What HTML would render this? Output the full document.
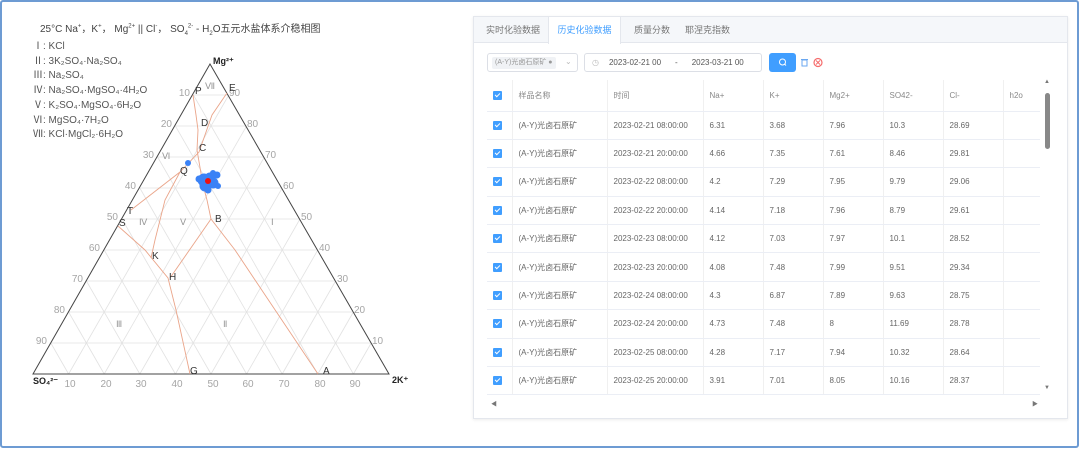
<!DOCTYPE html>
<html><head><meta charset="utf-8">
<style>
*{margin:0;padding:0;box-sizing:border-box}
body{width:1080px;height:450px;background:#fff;font-family:"Liberation Sans","Noto Sans CJK SC",sans-serif;position:relative;overflow:hidden}
.frame{position:absolute;left:0;top:0;width:1079px;height:448px;border:2px solid #6d9bd3;border-radius:3px}
.card{position:absolute;left:473px;top:16px;width:595px;height:403px;border:1px solid #e4e7ed;background:#fff;box-shadow:0 1px 3px rgba(0,0,0,.08)}
.tabs{height:26px;background:#f5f7fa;border-bottom:1px solid #e4e7ed;position:relative}
.tab{position:absolute;top:0;height:26px;line-height:26px;font-size:9px;color:#777}
.tab.act{background:#fff;color:#409eff;height:27px;border-left:1px solid #e4e7ed;border-right:1px solid #e4e7ed}
.sel{position:absolute;left:13px;top:36px;width:91px;height:19px;border:1px solid #dcdfe6;border-radius:3px}
.tag{position:absolute;left:4px;top:3px;height:12px;background:#f0f2f5;font-size:7px;color:#999;line-height:12px;padding:0 3px;border-radius:2px}
.date{position:absolute;left:110px;top:36px;width:178px;height:19px;border:1px solid #dcdfe6;border-radius:3px;font-size:8px;color:#555;line-height:17px}
.btn{position:absolute;left:295px;top:36px;width:27px;height:19px;background:#409eff;border-radius:3px}
table{position:absolute;left:13px;top:63px;border-collapse:collapse;font-size:8px;color:#666}
td{height:28.4px;border-bottom:1px solid #ebeef5;border-right:1px solid #f0f0f0;padding-left:6px;white-space:nowrap}
tr.h td{height:31px;color:#888}
.cb{display:inline-block;width:9px;height:9px;background:#409eff;border-radius:1px;position:relative;top:1px}
.cb:after{content:"";position:absolute;left:3px;top:1px;width:2px;height:4px;border:solid #fff;border-width:0 1px 1px 0;transform:rotate(45deg)}
</style></head><body>
<div class="frame"></div>
<div style="position:absolute;left:40px;top:20px;font-size:10px;color:#444">25°C Na<sup style="font-size:6px">+</sup>，K<sup style="font-size:6px">+</sup>， Mg<sup style="font-size:6px">2+</sup> || Cl<sup style="font-size:6px">-</sup>， SO<sub style="font-size:6px">4</sub><sup style="font-size:6px">2-</sup> - H<sub style="font-size:6px">2</sub>O五元水盐体系介稳相图</div>
<div style="position:absolute;left:33px;top:40px;font-size:10px;color:#555;line-height:14.7px">
Ⅰ: KCl<br>Ⅱ: 3K₂SO₄·Na₂SO₄<br>Ⅲ: Na₂SO₄<br>Ⅳ: Na₂SO₄·MgSO₄·4H₂O<br>Ⅴ: K₂SO₄·MgSO₄·6H₂O<br>Ⅵ: MgSO₄·7H₂O<br>Ⅶ: KCl·MgCl₂·6H₂O</div>
<svg width="470" height="450" style="position:absolute;left:0;top:0" font-family="Liberation Sans,sans-serif">
<g stroke="#e2e2e2" stroke-width="0.8">
<line x1="192.2" y1="95" x2="227.8" y2="95"/><line x1="174.4" y1="126" x2="245.6" y2="126"/><line x1="156.6" y1="157" x2="263.4" y2="157"/><line x1="138.8" y1="188" x2="281.2" y2="188"/><line x1="121" y1="219" x2="299" y2="219"/><line x1="103.2" y1="250" x2="316.8" y2="250"/><line x1="85.4" y1="281" x2="334.6" y2="281"/><line x1="67.6" y1="312" x2="352.4" y2="312"/><line x1="49.8" y1="343" x2="370.2" y2="343"/>
<line x1="68.6" y1="374" x2="228.8" y2="95"/><line x1="104.2" y1="374" x2="246.6" y2="126"/><line x1="139.8" y1="374" x2="264.4" y2="157"/><line x1="175.4" y1="374" x2="282.2" y2="188"/><line x1="211" y1="374" x2="300" y2="219"/><line x1="246.6" y1="374" x2="317.8" y2="250"/><line x1="282.2" y1="374" x2="335.6" y2="281"/><line x1="317.8" y1="374" x2="353.4" y2="312"/><line x1="353.4" y1="374" x2="371.2" y2="343"/>
<line x1="68.6" y1="374" x2="50.8" y2="343"/><line x1="104.2" y1="374" x2="68.6" y2="312"/><line x1="139.8" y1="374" x2="86.4" y2="281"/><line x1="175.4" y1="374" x2="104.2" y2="250"/><line x1="211" y1="374" x2="122" y2="219"/><line x1="246.6" y1="374" x2="139.8" y2="188"/><line x1="282.2" y1="374" x2="157.6" y2="157"/><line x1="317.8" y1="374" x2="175.4" y2="126"/><line x1="353.4" y1="374" x2="193.4" y2="95"/>
</g>
<polygon points="33,374 389,374 210,64" fill="none" stroke="#444" stroke-width="1"/>
<g fill="none" stroke="#eaa58a" stroke-width="0.9">
<polyline points="193,95 196,115 198,130 197,150 203,185 207,200 211,219"/>
<polyline points="227,93 212,115 199,152 180,172 131,210"/>
<polyline points="180,172 165,200 155,240 151,258"/>
<polyline points="118,226 145,250 168,278 176,310 190,374"/>
<polyline points="211,219 170,278"/>
<polyline points="211,219 235,250 318,374"/>
</g>
<g fill="#3b82f6">
<circle cx="188" cy="163" r="3"/>
<circle cx="204" cy="180" r="6.5"/><circle cx="210" cy="178" r="5.5"/><circle cx="213" cy="183" r="5.5"/><circle cx="205" cy="186" r="5.5"/><circle cx="217" cy="175" r="3.5"/><circle cx="199" cy="179" r="3.5"/><circle cx="208" cy="190" r="3.5"/><circle cx="218" cy="186" r="3"/><circle cx="213" cy="173" r="3"/>
</g>
<circle cx="208" cy="181" r="3" fill="#e11"/>
<g font-size="10" fill="#a5a5a5" text-anchor="end">
<text x="190" y="96">10</text><text x="172" y="127">20</text><text x="154" y="158">30</text><text x="136" y="189">40</text><text x="118" y="220">50</text><text x="100" y="251">60</text><text x="83" y="282">70</text><text x="65" y="313">80</text><text x="47" y="344">90</text>
</g>
<g font-size="10" fill="#a5a5a5">
<text x="229" y="96">90</text><text x="247" y="127">80</text><text x="265" y="158">70</text><text x="283" y="189">60</text><text x="301" y="220">50</text><text x="319" y="251">40</text><text x="337" y="282">30</text><text x="354" y="313">20</text><text x="372" y="344">10</text>
</g>
<g font-size="10" fill="#a5a5a5" text-anchor="middle">
<text x="70" y="387">10</text><text x="106" y="387">20</text><text x="141" y="387">30</text><text x="177" y="387">40</text><text x="213" y="387">50</text><text x="248" y="387">60</text><text x="284" y="387">70</text><text x="320" y="387">80</text><text x="355" y="387">90</text>
</g>
<g font-size="9" fill="#999">
<text x="205" y="89">Ⅶ</text><text x="162" y="159">Ⅵ</text><text x="139" y="225">Ⅳ</text><text x="180" y="225">Ⅴ</text><text x="271" y="225">Ⅰ</text><text x="116" y="327">Ⅲ</text><text x="223" y="327">Ⅱ</text>
</g>
<g font-size="10" fill="#333">
<text x="195" y="94">P</text><text x="229" y="91">E</text><text x="201" y="126">D</text><text x="199" y="151">C</text><text x="180" y="174">Q</text><text x="127" y="214">T</text><text x="119" y="226">S</text><text x="152" y="259">K</text><text x="169" y="280">H</text><text x="215" y="222">B</text><text x="190" y="374">G</text><text x="323" y="374">A</text>
</g>
<g font-size="9" font-weight="bold" fill="#222">
<text x="213" y="64">Mg²⁺</text><text x="33" y="384">SO₄²⁻</text><text x="392" y="383">2K⁺</text>
</g>
</svg>

<div class="card">
<div class="tabs">
<div class="tab" style="left:12px">实时化验数据</div>
<div class="tab act" style="left:74px;width:73px;text-align:center">历史化验数据</div>
<div class="tab" style="left:160px">质量分数</div>
<div class="tab" style="left:211px">耶涅克指数</div>
</div>
<div class="sel"><span class="tag">(A-Y)光卤石原矿 ●</span><span style="position:absolute;left:77px;top:3px;font-size:8px;color:#bbb">⌄</span></div>
<div class="date"><span style="margin-left:7px;color:#bbb">◷</span><span style="margin-left:10px">2023-02-21 00</span><span style="margin-left:14px">-</span><span style="margin-left:14px">2023-03-21 00</span></div>
<div class="btn"><svg width="27" height="19"><circle cx="13.5" cy="9" r="3" fill="none" stroke="#fff" stroke-width="1"/><line x1="15.5" y1="11" x2="17" y2="12.5" stroke="#fff"/></svg></div>
<svg style="position:absolute;left:326px;top:40px" width="28" height="12"><rect x="2" y="3" width="5" height="6" fill="none" stroke="#6aa7f0" stroke-width="1"/><line x1="1" y1="2.5" x2="8" y2="2.5" stroke="#6aa7f0"/><circle cx="18" cy="5.5" r="4" fill="none" stroke="#f56c6c" stroke-width="1.2"/><path d="M16 3.5l4 4M20 3.5l-4 4" stroke="#f56c6c"/></svg>
<table>
<tr class="h"><td style="width:25px"><span class="cb"></span></td><td style="width:95px">样品名称</td><td style="width:96px">时间</td><td style="width:60px">Na+</td><td style="width:60px">K+</td><td style="width:60px">Mg2+</td><td style="width:60px">SO42-</td><td style="width:60px">Cl-</td><td style="width:37px;border-right:none">h2o</td></tr>
<tr><td><span class="cb"></span></td><td>(A-Y)光卤石原矿</td><td>2023-02-21 08:00:00</td><td>6.31</td><td>3.68</td><td>7.96</td><td>10.3</td><td>28.69</td><td style="border-right:none"></td></tr>
<tr><td><span class="cb"></span></td><td>(A-Y)光卤石原矿</td><td>2023-02-21 20:00:00</td><td>4.66</td><td>7.35</td><td>7.61</td><td>8.46</td><td>29.81</td><td style="border-right:none"></td></tr>
<tr><td><span class="cb"></span></td><td>(A-Y)光卤石原矿</td><td>2023-02-22 08:00:00</td><td>4.2</td><td>7.29</td><td>7.95</td><td>9.79</td><td>29.06</td><td style="border-right:none"></td></tr>
<tr><td><span class="cb"></span></td><td>(A-Y)光卤石原矿</td><td>2023-02-22 20:00:00</td><td>4.14</td><td>7.18</td><td>7.96</td><td>8.79</td><td>29.61</td><td style="border-right:none"></td></tr>
<tr><td><span class="cb"></span></td><td>(A-Y)光卤石原矿</td><td>2023-02-23 08:00:00</td><td>4.12</td><td>7.03</td><td>7.97</td><td>10.1</td><td>28.52</td><td style="border-right:none"></td></tr>
<tr><td><span class="cb"></span></td><td>(A-Y)光卤石原矿</td><td>2023-02-23 20:00:00</td><td>4.08</td><td>7.48</td><td>7.99</td><td>9.51</td><td>29.34</td><td style="border-right:none"></td></tr>
<tr><td><span class="cb"></span></td><td>(A-Y)光卤石原矿</td><td>2023-02-24 08:00:00</td><td>4.3</td><td>6.87</td><td>7.89</td><td>9.63</td><td>28.75</td><td style="border-right:none"></td></tr>
<tr><td><span class="cb"></span></td><td>(A-Y)光卤石原矿</td><td>2023-02-24 20:00:00</td><td>4.73</td><td>7.48</td><td>8</td><td>11.69</td><td>28.78</td><td style="border-right:none"></td></tr>
<tr><td><span class="cb"></span></td><td>(A-Y)光卤石原矿</td><td>2023-02-25 08:00:00</td><td>4.28</td><td>7.17</td><td>7.94</td><td>10.32</td><td>28.64</td><td style="border-right:none"></td></tr>
<tr><td><span class="cb"></span></td><td>(A-Y)光卤石原矿</td><td>2023-02-25 20:00:00</td><td>3.91</td><td>7.01</td><td>8.05</td><td>10.16</td><td>28.37</td><td style="border-right:none"></td></tr>
</table>
<div style="position:absolute;left:568px;top:62px;width:10px;height:316px">
<div style="position:absolute;left:2px;top:0;font-size:6px;color:#777">▲</div>
<div style="position:absolute;left:3px;top:14px;width:5px;height:56px;background:#888;border-radius:3px"></div>
<div style="position:absolute;left:2px;top:306px;font-size:6px;color:#777">▼</div>
</div>
<div style="position:absolute;left:17px;top:382px;font-size:6px;color:#777">◀</div>
<div style="position:absolute;left:558px;top:382px;font-size:6px;color:#777">▶</div>
</div>
</body></html>
